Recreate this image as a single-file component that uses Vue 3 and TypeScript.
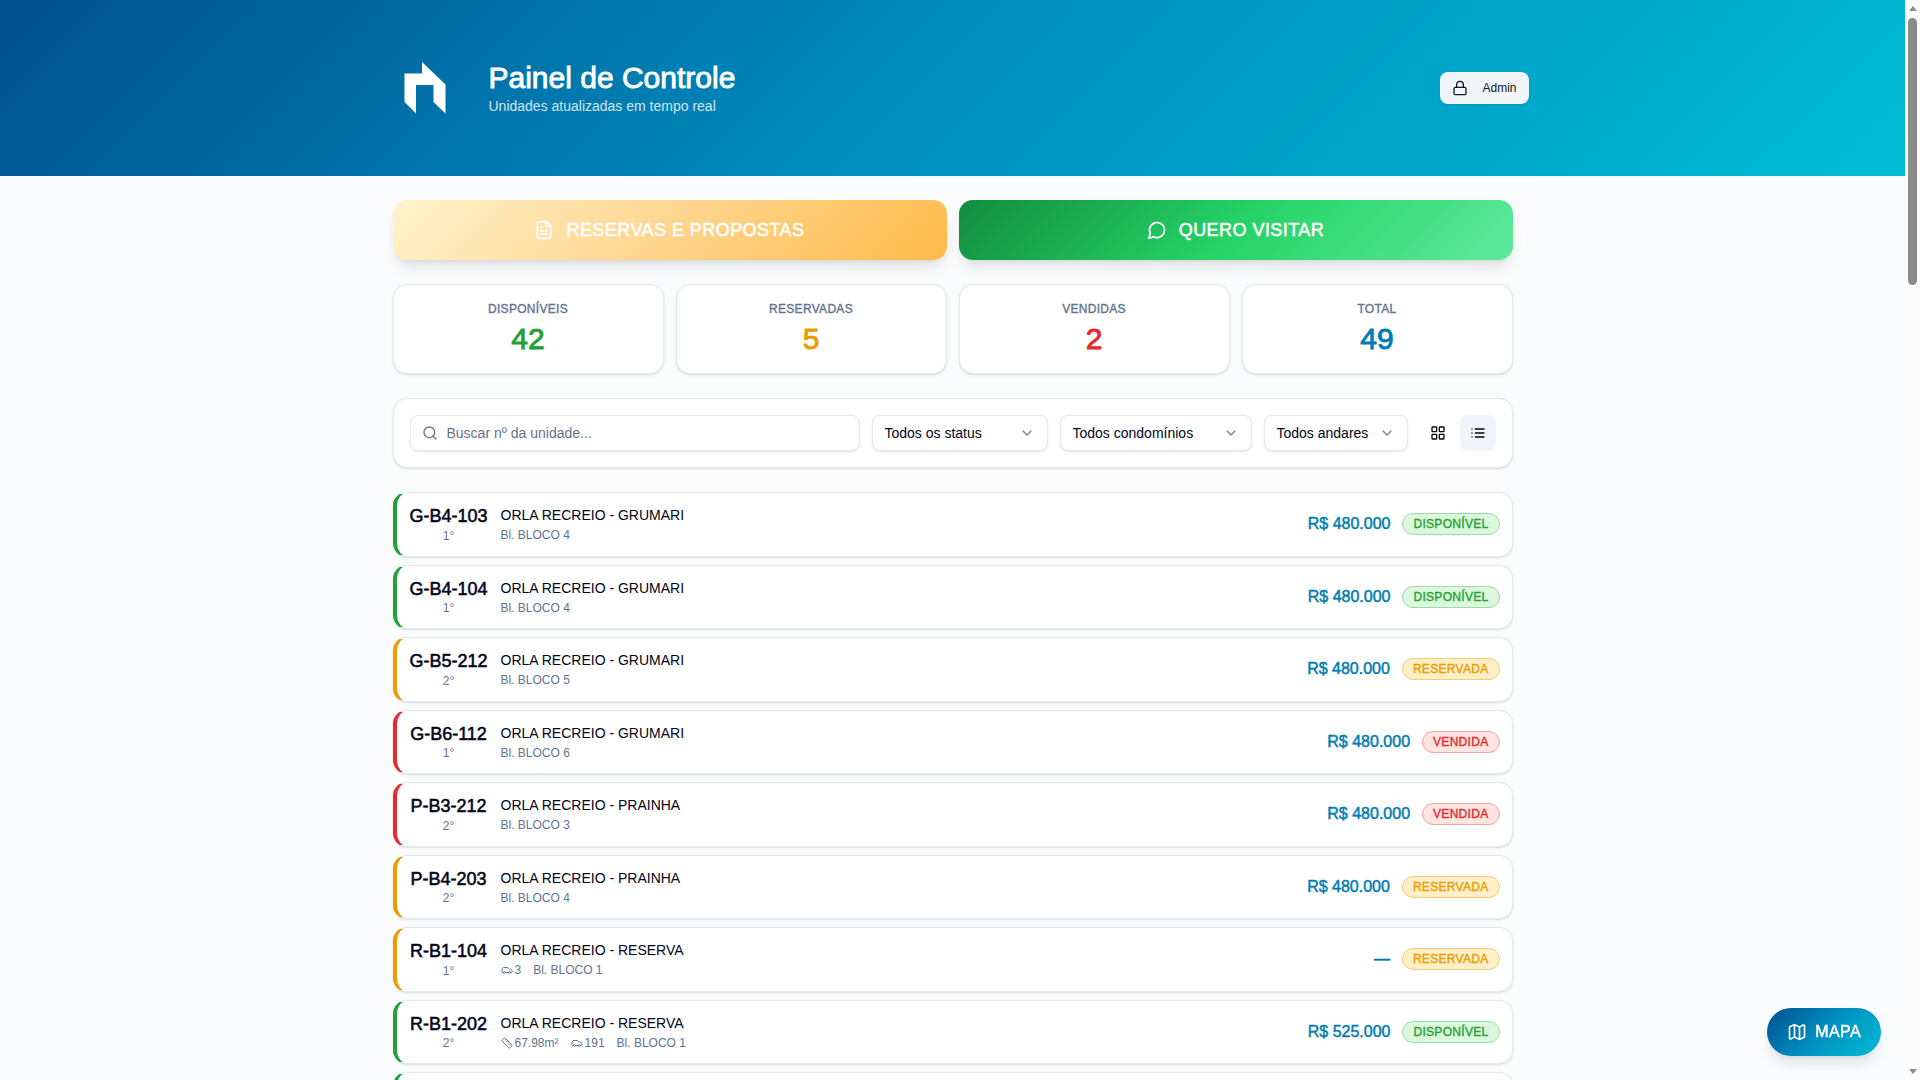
<script setup lang="ts">
type Status = 'disponivel' | 'reservada' | 'vendida'
interface Unit {
  code: string
  floor: string
  name: string
  block: string
  price: string
  status: Status
  area?: string
  parking?: string
}

const labels: Record<Status, string> = {
  disponivel: 'DISPONÍVEL',
  reservada: 'RESERVADA',
  vendida: 'VENDIDA',
}

const stats = [
  { label: 'DISPONÍVEIS', value: 42, tone: 'green' },
  { label: 'RESERVADAS', value: 5, tone: 'amber' },
  { label: 'VENDIDAS', value: 2, tone: 'red' },
  { label: 'TOTAL', value: 49, tone: 'blue' },
]

const filters = [
  { id: 'status', label: 'Status', text: 'Todos os status' },
  { id: 'condominio', label: 'Condomínio', text: 'Todos condomínios' },
  { id: 'andar', label: 'Andar', text: 'Todos andares' },
]

const units: Unit[] = [
  { code: 'G-B4-103', floor: '1°', name: 'ORLA RECREIO - GRUMARI', block: 'Bl. BLOCO 4', price: 'R$ 480.000', status: 'disponivel' },
  { code: 'G-B4-104', floor: '1°', name: 'ORLA RECREIO - GRUMARI', block: 'Bl. BLOCO 4', price: 'R$ 480.000', status: 'disponivel' },
  { code: 'G-B5-212', floor: '2°', name: 'ORLA RECREIO - GRUMARI', block: 'Bl. BLOCO 5', price: 'R$ 480.000', status: 'reservada' },
  { code: 'G-B6-112', floor: '1°', name: 'ORLA RECREIO - GRUMARI', block: 'Bl. BLOCO 6', price: 'R$ 480.000', status: 'vendida' },
  { code: 'P-B3-212', floor: '2°', name: 'ORLA RECREIO - PRAINHA', block: 'Bl. BLOCO 3', price: 'R$ 480.000', status: 'vendida' },
  { code: 'P-B4-203', floor: '2°', name: 'ORLA RECREIO - PRAINHA', block: 'Bl. BLOCO 4', price: 'R$ 480.000', status: 'reservada' },
  { code: 'R-B1-104', floor: '1°', name: 'ORLA RECREIO - RESERVA', block: 'Bl. BLOCO 1', price: '—', status: 'reservada', parking: '3' },
  { code: 'R-B1-202', floor: '2°', name: 'ORLA RECREIO - RESERVA', block: 'Bl. BLOCO 1', price: 'R$ 525.000', status: 'disponivel', area: '67.98m²', parking: '191' },
  { code: 'R-B1-203', floor: '2°', name: 'ORLA RECREIO - RESERVA', block: 'Bl. BLOCO 1', price: 'R$ 525.000', status: 'disponivel' },
]
</script>

<template>
  <div class="viewport">
    <div class="page">
      <header class="hero">
        <div class="hero-inner">
          <svg class="logo" viewBox="0 0 64 64" fill="#fff" aria-hidden="true">
            <path d="M11.500 17.500H29V6L52.500 28.500V57.500L40.500 46V29H23V57.500L11.500 46Z" />
          </svg>
          <div class="titles">
            <h1>Painel de Controle</h1>
            <p>Unidades atualizadas em tempo real</p>
          </div>
          <button class="admin" type="button">
            <svg class="icon s16" viewBox="0 0 24 24" aria-hidden="true">
              <rect x="3" y="11" width="18" height="11" rx="2" />
              <path d="M7 11V7a5 5 0 0 1 10 0v4" />
            </svg>
            Admin
          </button>
        </div>
      </header>

      <main class="content">
        <div class="actions">
          <button class="action gold" type="button">
            <svg class="icon s20" viewBox="0 0 24 24" aria-hidden="true">
              <path d="M15 2H6a2 2 0 0 0-2 2v16a2 2 0 0 0 2 2h12a2 2 0 0 0 2-2V7Z" />
              <path d="M14 2v4a2 2 0 0 0 2 2h4M10 9H8M16 13H8M16 17H8" />
            </svg>
            RESERVAS E PROPOSTAS
          </button>
          <button class="action green-bg" type="button">
            <svg class="icon s20" viewBox="0 0 24 24" aria-hidden="true">
              <path d="M7.900 20A9 9 0 1 0 4 16.100L2 22Z" />
            </svg>
            QUERO VISITAR
          </button>
        </div>

        <section class="stats">
          <div v-for="s in stats" :key="s.label" class="card stat">
            <span class="stat-label">{{ s.label }}</span>
            <span class="stat-value" :class="s.tone">{{ s.value }}</span>
          </div>
        </section>

        <section class="card filters">
          <div class="search">
            <svg class="icon s16" viewBox="0 0 24 24" aria-hidden="true">
              <circle cx="11" cy="11" r="8" />
              <path d="m21 21-4.300-4.300" />
            </svg>
            <input type="text" placeholder="Buscar nº da unidade..." aria-label="Buscar nº da unidade" />
          </div>
          <div v-for="f in filters" :key="f.id" class="picker" :class="f.id">
            <select :id="f.id" :aria-label="f.label">
              <option>{{ f.text }}</option>
            </select>
            <svg class="icon s16" viewBox="0 0 24 24" aria-hidden="true"><path d="m6 9 6 6 6-6" /></svg>
          </div>
          <div class="modes">
            <button type="button" aria-label="Grade">
              <svg class="icon s16" viewBox="0 0 24 24" aria-hidden="true">
                <rect x="3" y="3" width="7" height="7" rx="1" />
                <rect x="14" y="3" width="7" height="7" rx="1" />
                <rect x="14" y="14" width="7" height="7" rx="1" />
                <rect x="3" y="14" width="7" height="7" rx="1" />
              </svg>
            </button>
            <button type="button" class="active" aria-label="Lista">
              <svg class="icon s16" viewBox="0 0 24 24" aria-hidden="true">
                <path d="M3 12h.01M3 18h.01M3 6h.01M8 12h13M8 18h13M8 6h13" />
              </svg>
            </button>
          </div>
        </section>

        <section class="units">
          <article v-for="u in units" :key="u.code" class="card unit" :class="u.status">
            <div class="unit-id">
              <strong>{{ u.code }}</strong>
              <span>{{ u.floor }}</span>
            </div>
            <div class="unit-info">
              <span class="unit-name">{{ u.name }}</span>
              <div class="unit-meta">
                <span v-if="u.area">
                  <svg class="icon s12" viewBox="0 0 24 24" aria-hidden="true">
                    <path d="M21.300 15.300a2.400 2.400 0 0 1 0 3.400l-2.600 2.600a2.400 2.400 0 0 1-3.400 0L2.700 8.700a2.410 2.410 0 0 1 0-3.400l2.600-2.600a2.410 2.410 0 0 1 3.400 0Z" />
                    <path d="m14.500 12.500 2-2M11.500 9.500l2-2M8.500 6.500l2-2M17.500 15.500l2-2" />
                  </svg>{{ u.area }}
                </span>
                <span v-if="u.parking">
                  <svg class="icon s12" viewBox="0 0 24 24" aria-hidden="true">
                    <path d="M19 17h2c.6 0 1-.4 1-1v-3c0-.9-.7-1.700-1.500-1.900C18.700 10.600 16 10 16 10s-1.300-1.400-2.200-2.300c-.5-.4-1.100-.7-1.800-.7H5c-.6 0-1.100.4-1.400.9l-1.400 2.900A3.700 3.700 0 0 0 2 12v4c0 .6.4 1 1 1h2" />
                    <circle cx="7" cy="17" r="2" />
                    <path d="M9 17h6" />
                    <circle cx="17" cy="17" r="2" />
                  </svg>{{ u.parking }}
                </span>
                <span>{{ u.block }}</span>
              </div>
            </div>
            <span class="price">{{ u.price }}</span>
            <span class="badge">{{ labels[u.status] }}</span>
          </article>
        </section>
      </main>
    </div>

    <button class="map" type="button">
      <svg class="icon s20" viewBox="0 0 24 24" aria-hidden="true">
        <path d="M14.106 5.553a2 2 0 0 0 1.788 0l3.659-1.830A1 1 0 0 1 21 4.619v12.764a1 1 0 0 1-.553.894l-4.553 2.277a2 2 0 0 1-1.788 0l-4.212-2.106a2 2 0 0 0-1.788 0l-3.659 1.830A1 1 0 0 1 3 19.381V6.618a1 1 0 0 1 .553-.894l4.553-2.277a2 2 0 0 1 1.788 0ZM15 5.764v15M9 3.236v15" />
      </svg>
      MAPA
    </button>

    <div class="scrollbar" aria-hidden="true">
      <span class="arrow up"></span>
      <span class="thumb"></span>
      <span class="arrow down"></span>
    </div>
  </div>
</template>

<style>
body {
  margin: 0;
  background: #fbfcfe;
}
</style>

<style scoped>
.viewport {
  display: flex;
  height: 100vh;
  overflow: hidden;
  background: #fbfcfe;
  color: #020618;
  font-family: "Liberation Sans", Arial, sans-serif;
}
.viewport * {
  box-sizing: border-box;
}
button,
input,
select {
  font: inherit;
  color: inherit;
}
button {
  cursor: pointer;
  border: 0;
}
.icon {
  flex: none;
  fill: none;
  stroke: currentColor;
  stroke-width: 2;
  stroke-linecap: round;
  stroke-linejoin: round;
}
.s12 { width: 12px; height: 12px; }
.s16 { width: 16px; height: 16px; }
.s20 { width: 20px; height: 20px; }

/* semibold look on the regular face */
h1,
.action,
.stat-label,
.stat-value,
.unit-id strong,
.price,
.badge,
.map {
  font-weight: 400;
  -webkit-text-stroke: 0.03em currentColor;
}
.action,
.stat-label,
.badge,
.map {
  letter-spacing: 0.025em;
}

.page {
  flex: 1;
  min-width: 0;
}
.hero {
  padding: 48px 24px;
  background: linear-gradient(135deg, #00508f 0%, #0090c0 50%, #00bcd4 100%);
}
.hero-inner {
  display: flex;
  align-items: center;
  gap: 32px;
  max-width: 1152px;
  height: 80px;
  margin: 0 auto;
  padding-left: 16px;
}
.logo {
  width: 64px;
  height: 64px;
}
.titles {
  flex: 1;
  color: #fff;
}
h1 {
  margin: 0;
  font-size: 30px;
  line-height: 36px;
}
.titles p {
  margin: 0;
  font-size: 14px;
  line-height: 20px;
  opacity: 0.8;
}
.admin {
  display: flex;
  align-items: center;
  gap: 14px;
  height: 32px;
  padding: 0 12px;
  border-radius: 8px;
  background: #f1f5f9;
  color: #0f172b;
  font-size: 12px;
  box-shadow: 0 1px 2px rgb(0 0 0 / 0.1);
}

.content {
  display: flex;
  flex-direction: column;
  gap: 24px;
  max-width: 1120px;
  margin: 0 auto;
  padding: 24px 0;
}
.actions {
  display: grid;
  grid-template-columns: 1fr 1fr;
  gap: 12px;
}
.action {
  display: flex;
  align-items: center;
  justify-content: center;
  gap: 12px;
  height: 60px;
  border-radius: 14px;
  color: #fff;
  font-size: 18px;
  box-shadow: 0 10px 15px -3px rgb(0 0 0 / 0.1), 0 4px 6px -4px rgb(0 0 0 / 0.1);
}
.gold { background: linear-gradient(135deg, #fff3cd 0%, #ffd58e 50%, #ffba49 100%); }
.green-bg { background: linear-gradient(135deg, #128c3e 0%, #25d366 50%, #5fe99d 100%); }

.card {
  background: #fff;
  border: 1px solid #e2e8f0;
  border-radius: 14px;
  box-shadow: 0 1px 3px rgb(0 0 0 / 0.1), 0 1px 2px -1px rgb(0 0 0 / 0.1);
}
.stats {
  display: grid;
  grid-template-columns: repeat(4, 1fr);
  gap: 12px;
}
.stat {
  display: flex;
  flex-direction: column;
  align-items: center;
  gap: 4px;
  height: 90px;
  padding-top: 16px;
}
.stat-label {
  color: #62748e;
  font-size: 12px;
  line-height: 16px;
}
.stat-value {
  font-size: 30px;
  line-height: 36px;
}
.green { color: #22a236; }
.amber { color: #e99d00; }
.red { color: #e72930; }
.blue { color: #007db0; }

.filters {
  display: flex;
  gap: 12px;
  padding: 16px;
}
.search {
  display: flex;
  flex: 1;
  align-items: center;
  gap: 9px;
  height: 36px;
  padding: 0 11px;
  border: 1px solid #e2e8f0;
  border-radius: 8px;
  color: #62748e;
  box-shadow: 0 1px 2px rgb(0 0 0 / 0.1);
}
.search input {
  flex: 1;
  min-width: 0;
  padding: 0;
  border: 0;
  outline: 0;
  background: none;
  font-size: 14px;
}
.search input::placeholder {
  color: #62748e;
}
.picker {
  display: grid;
  align-items: center;
  height: 36px;
}
.picker > * {
  grid-area: 1 / 1;
}
.picker.status { width: 176px; }
.picker.condominio { width: 192px; }
.picker.andar { width: 144px; }
.picker select {
  width: 100%;
  height: 36px;
  padding: 0 12px;
  appearance: none;
  border: 1px solid #e2e8f0;
  border-radius: 8px;
  background: #fff;
  font-size: 14px;
  box-shadow: 0 1px 2px rgb(0 0 0 / 0.1);
}
.picker .icon {
  justify-self: end;
  margin-right: 13px;
  opacity: 0.5;
  pointer-events: none;
}
.modes {
  display: flex;
  gap: 4px;
}
.modes button {
  display: grid;
  place-items: center;
  width: 36px;
  height: 36px;
  padding: 0;
  border-radius: 8px;
  background: none;
}
.modes .active {
  background: #f1f5f9;
}

.units {
  display: flex;
  flex-direction: column;
  gap: 8px;
}
.unit {
  display: flex;
  align-items: center;
  gap: 12px;
  padding: 12px;
  border-left: 4px solid var(--tone);
}
.unit.disponivel { --tone: #22a236; --soft: #dcf7dc; --line: #9ddba4; }
.unit.reservada { --tone: #e99d00; --soft: #ffefc6; --line: #f6cd70; }
.unit.vendida { --tone: #e72930; --soft: #ffe4e1; --line: #f7a3a5; }
.unit-id {
  display: flex;
  flex-direction: column;
  align-items: center;
  width: 80px;
}
.unit-id strong {
  font-size: 18px;
  line-height: 1.25;
  white-space: nowrap;
}
.unit-id span {
  color: #62748e;
  font-size: 12px;
  line-height: 16px;
}
.unit-info {
  flex: 1;
}
.unit-name {
  display: block;
  font-size: 14px;
  line-height: 20px;
}
.unit-meta {
  display: flex;
  gap: 12px;
  margin-top: 2px;
  color: #62748e;
  font-size: 12px;
  line-height: 16px;
}
.unit-meta span {
  display: flex;
  align-items: center;
  gap: 2px;
}
.price {
  color: #007db0;
  font-size: 16px;
  line-height: 24px;
}
.badge {
  padding: 2px 10px;
  border: 1px solid var(--line);
  border-radius: 12px;
  background: var(--soft);
  color: var(--tone);
  font-size: 12px;
  line-height: 16px;
}

.map {
  position: fixed;
  right: 39px;
  bottom: 24px;
  display: flex;
  align-items: center;
  gap: 8px;
  height: 48px;
  padding: 0 20px;
  border-radius: 24px;
  background: linear-gradient(135deg, #00508f 0%, #0090c0 50%, #00bcd4 100%);
  color: #fff;
  font-size: 16px;
  box-shadow: 0 10px 15px -3px rgb(0 0 0 / 0.1), 0 4px 6px -4px rgb(0 0 0 / 0.1);
}
.scrollbar {
  display: flex;
  flex-direction: column;
  align-items: center;
  width: 15px;
  height: 100vh;
  padding: 6px 0;
  background: #fcfcfc;
}
.thumb {
  width: 9px;
  height: 25%;
  margin: 7px 0 auto;
  border-radius: 5px;
  background: #8b8b8b;
}
.arrow {
  border: 4px solid transparent;
}
.up {
  border-top: 0;
  border-bottom: 5px solid #8b8b8b;
}
.down {
  border-bottom: 0;
  border-top: 5px solid #8b8b8b;
}
</style>
